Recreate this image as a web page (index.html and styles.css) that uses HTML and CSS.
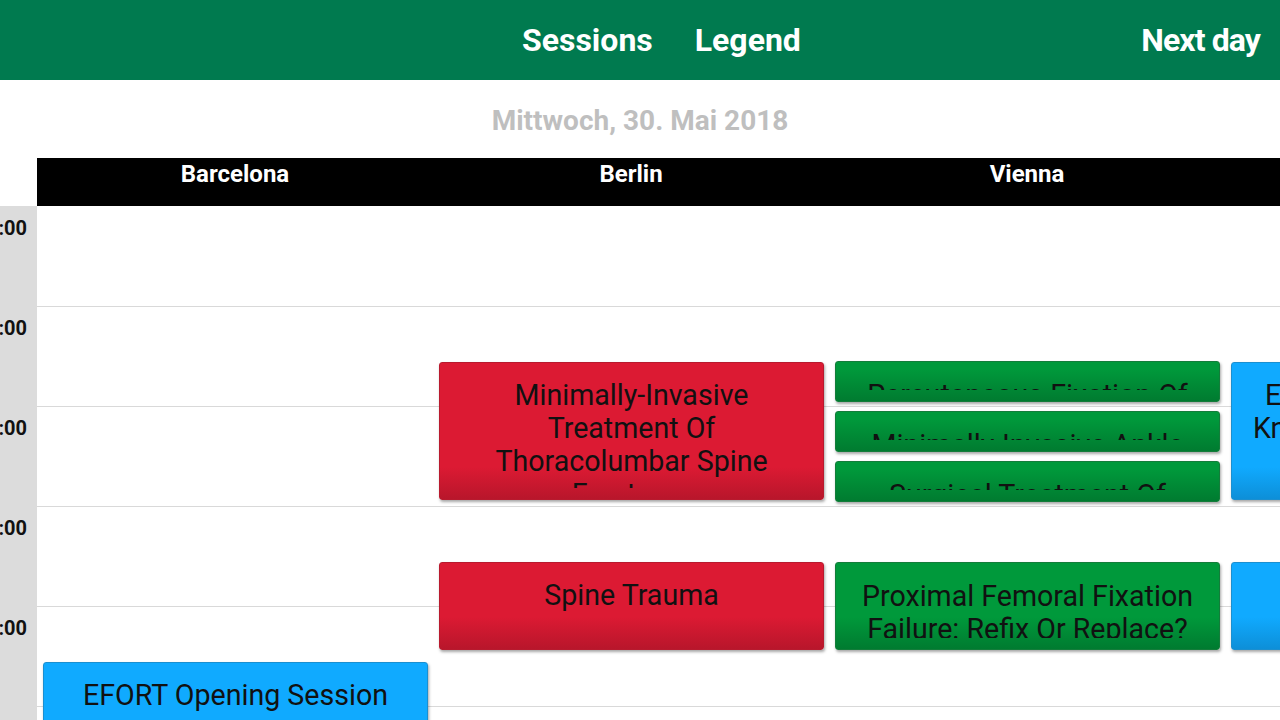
FILE: index.html
```html
<!DOCTYPE html>
<html lang="de">
<head>
<meta charset="utf-8">
<title>Sessions</title>
<link rel="stylesheet" href="styles.css">
</head>
<body>
<header class="topbar">
  <nav class="nav">
    <a class="nav-link">Sessions</a>
    <a class="nav-link">Legend</a>
  </nav>
  <a class="nav-link next">Next day</a>
</header>
<div class="date">Mittwoch, 30. Mai 2018</div>
<section class="schedule">
  <div class="rooms">
    <div class="room">Barcelona</div>
    <div class="room">Berlin</div>
    <div class="room">Vienna</div>
    <div class="room">Zürich</div>
  </div>
  <div class="grid">
    <div class="times">
      <div class="time">08:00</div>
      <div class="time">09:00</div>
      <div class="time">10:00</div>
      <div class="time">11:00</div>
      <div class="time">12:00</div>
    </div>
    <div class="canvas">
      <div class="row"></div>
      <div class="row"></div>
      <div class="row"></div>
      <div class="row"></div>
      <div class="row"></div>
      <div class="row"></div>

      <div class="card red" style="left:402px;top:156px;height:138px"><div class="card-text">Minimally-Invasive Treatment Of Thoracolumbar Spine Fractures</div></div>
      <div class="card red" style="left:402px;top:356px;height:88px"><div class="card-text">Spine Trauma</div></div>

      <div class="card green" style="left:798px;top:155px;height:41px"><div class="card-text">Percutaneous Fixation Of Pelvic Ring Injuries</div></div>
      <div class="card green" style="left:798px;top:205px;height:41px"><div class="card-text">Minimally-Invasive Ankle Fixation Techniques</div></div>
      <div class="card green" style="left:798px;top:255px;height:41px"><div class="card-text">Surgical Treatment Of Periprosthetic Fractures</div></div>
      <div class="card green" style="left:798px;top:356px;height:88px"><div class="card-text">Proximal Femoral Fixation Failure: Refix Or Replace?</div></div>

      <div class="card blue" style="left:1194px;top:156px;height:138px"><div class="card-text">Early Complications With Knee Arthroplasty Revision</div></div>
      <div class="card blue" style="left:1194px;top:356px;height:88px"><div class="card-text">Hip Revision</div></div>

      <div class="card blue" style="left:6px;top:456px;height:100px"><div class="card-text">EFORT Opening Session</div></div>
    </div>
  </div>
</section>
</body>
</html>
```

FILE: styles.css
```css
html, body {
  margin: 0;
  padding: 0;
  width: 1280px;
  height: 720px;
  overflow: hidden;
  background: #ffffff;
  font-family: Roboto, "Liberation Sans", sans-serif;
}

.topbar {
  height: 80px;
  background: #007a4f;
  display: flex;
  align-items: center;
  justify-content: space-between;
  padding: 0 20px 0 522px;
  box-sizing: border-box;
}

.nav {
  display: flex;
  gap: 42px;
}

.nav-link {
  color: #ffffff;
  font-weight: 700;
  font-size: 32px;
  line-height: 42px;
  letter-spacing: 0;
  text-decoration: none;
}

.next {
  letter-spacing: -0.9px;
}

.date {
  height: 78px;
  line-height: 81px;
  text-align: center;
  color: #bfbfbf;
  font-weight: 700;
  font-size: 28px;
}

.schedule {
  display: flex;
  flex-direction: column;
}

.rooms {
  margin-left: 37px;
  height: 48px;
  background: #000000;
  display: grid;
  grid-template-columns: repeat(4, 396px);
  overflow: hidden;
}

.room {
  color: #ffffff;
  font-weight: 700;
  font-size: 24px;
  line-height: 28px;
  padding-top: 2px;
  text-align: center;
}

.grid {
  display: flex;
  height: 520px;
}

.times {
  width: 37px;
  flex: none;
  background: #dcdcdc;
  overflow: hidden;
}

.time {
  height: 100px;
  box-sizing: border-box;
  padding: 10px 10px 0 0;
  text-align: right;
  font-weight: 700;
  font-size: 20px;
  line-height: 24px;
  color: #111111;
  white-space: nowrap;
  direction: rtl;
}

.canvas {
  position: relative;
  flex: 1;
  overflow: hidden;
}

.row {
  height: 100px;
  box-sizing: border-box;
  border-top: 1px solid #d9d9d9;
}

.row:first-child {
  border-top: none;
}

.card {
  position: absolute;
  width: 385px;
  box-sizing: border-box;
  border-radius: 3px;
  padding: 16px 9px 11px;
  display: flex;
  flex-direction: column;
  box-shadow: 1px 2px 3px rgba(0, 0, 0, 0.35);
}

.card-text {
  flex: 1;
  min-height: 0;
  overflow: hidden;
  text-align: center;
  font-size: 28.6px;
  line-height: 33px;
  color: #111111;
}

.green .card-text {
  padding-top: 1px;
}

.red {
  border: 1px solid #b81a2e;
  background: linear-gradient(to bottom, #dc1a33 0, #dc1a33 calc(100% - 32px), #b8162b 100%);
}

.green {
  border: 1px solid #137d3a;
  background: linear-gradient(to bottom, #00993b 0, #00993b calc(100% - 32px), #007b30 100%);
}

.blue {
  border: 1px solid #1b8fd0;
  background: linear-gradient(to bottom, #10aaff 0, #10aaff calc(100% - 32px), #0d8fd8 100%);
}
```
